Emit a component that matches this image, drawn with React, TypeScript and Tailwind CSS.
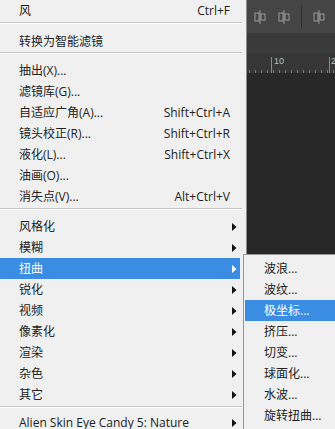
import React from 'react';

type Item =
  | { kind: 'item'; label: string; shortcut?: string; arrow?: boolean; active?: boolean }
  | { kind: 'sep'; h: string; pt: string };

const font = { fontFamily: '"Open Sans", "Noto Sans CJK SC", sans-serif' };

const items: Item[] = [
  { kind: 'item', label: '风', shortcut: 'Ctrl+F' },
  { kind: 'sep', h: 'h-[10px]', pt: 'pt-[1px]' },
  { kind: 'item', label: '转换为智能滤镜' },
  { kind: 'sep', h: 'h-[8px]', pt: 'pt-0' },
  { kind: 'item', label: '抽出(X)...' },
  { kind: 'item', label: '滤镜库(G)...' },
  { kind: 'item', label: '自适应广角(A)...', shortcut: 'Shift+Ctrl+A' },
  { kind: 'item', label: '镜头校正(R)...', shortcut: 'Shift+Ctrl+R' },
  { kind: 'item', label: '液化(L)...', shortcut: 'Shift+Ctrl+X' },
  { kind: 'item', label: '油画(O)...' },
  { kind: 'item', label: '消失点(V)...', shortcut: 'Alt+Ctrl+V' },
  { kind: 'sep', h: 'h-[9px]', pt: 'pt-[1px]' },
  { kind: 'item', label: '风格化', arrow: true },
  { kind: 'item', label: '模糊', arrow: true },
  { kind: 'item', label: '扭曲', arrow: true, active: true },
  { kind: 'item', label: '锐化', arrow: true },
  { kind: 'item', label: '视频', arrow: true },
  { kind: 'item', label: '像素化', arrow: true },
  { kind: 'item', label: '渲染', arrow: true },
  { kind: 'item', label: '杂色', arrow: true },
  { kind: 'item', label: '其它', arrow: true },
  { kind: 'sep', h: 'h-[7px]', pt: 'pt-[1px]' },
  { kind: 'item', label: 'Alien Skin Eye Candy 5: Nature', arrow: true },
];

const subItems = ['波浪...', '波纹...', '极坐标...', '挤压...', '切变...', '球面化...', '水波...', '旋转扭曲...'];

function Arrow({ white }: { white?: boolean }) {
  return (
    <svg width="5" height="8" viewBox="0 0 5 8" className="shrink-0">
      <polygon points="0,0 4.5,4 0,8" fill={white ? '#ffffff' : '#111111'} />
    </svg>
  );
}

function AlignIcon() {
  return (
    <svg width="14" height="14" viewBox="0 0 14 14">
      <rect x="6.5" y="0" width="1" height="14" fill="#9a9a9a" />
      <rect x="2" y="3" width="4" height="8" fill="none" stroke="#9a9a9a" strokeWidth="1" />
      <rect x="8" y="4" width="4" height="6" fill="none" stroke="#9a9a9a" strokeWidth="1" />
    </svg>
  );
}

export default function App() {
  return (
    <div className="relative w-[335px] h-[429px] overflow-hidden bg-[#282828] flex" style={font}>
      {/* main menu */}
      <div className="w-[247px] shrink-0 bg-[#f0f0f0] border-r border-[#8a8a8a] text-[12px] text-[#222222]">
        {items.map((it, i) =>
          it.kind === 'sep' ? (
            <div key={i} className={`${it.h} ${it.pt} pr-[4px]`}>
              <div className="h-[2px] border-t border-[#c4c4c4] border-b border-b-white" />
            </div>
          ) : (
            <div
              key={i}
              className={`h-[21px] flex items-center pl-[19px] mr-[6px] ${it.arrow ? 'pr-[3px]' : 'pr-[10px]'} ${
                it.active ? 'bg-[#3b8de4] text-white' : ''
              }`}
            >
              <span className="flex-1 whitespace-nowrap">{it.label}</span>
              {it.shortcut && <span className="whitespace-nowrap">{it.shortcut}</span>}
              {it.arrow && <Arrow white={it.active} />}
            </div>
          )
        )}
      </div>

      {/* dark workspace on the right */}
      <div className="flex-1 flex flex-col">
        <div className="h-[33px] bg-[#454545] flex items-center pl-[6px] gap-[10px]">
          <AlignIcon />
          <AlignIcon />
          <div className="w-px h-[22px] bg-[#2e2e2e]" />
          <AlignIcon />
        </div>
        <div className="h-[20px] bg-[#3a3a3a]" />
        <div className="h-[20px] bg-[#363636] relative flex items-end">
          <div className="absolute left-[24px] top-[4px] h-[16px] w-px bg-[#8a8a8a]" />
          <span className="absolute left-[27px] top-[2px] text-[9px] text-[#bdbdbd]" style={{ fontFamily: '"Liberation Sans", sans-serif' }}>
            10
          </span>
          <div className="absolute left-[82px] top-[4px] h-[16px] w-px bg-[#8a8a8a]" />
          <span className="absolute left-[84px] top-[2px] text-[9px] text-[#bdbdbd]" style={{ fontFamily: '"Liberation Sans", sans-serif' }}>
            2
          </span>
          <div className="flex items-end gap-[5px] pl-[2px] h-[4px] w-full">
            {Array.from({ length: 18 }).map((_, i) => (
              <div key={i} className="w-px h-[3px] bg-[#7a7a7a]" />
            ))}
          </div>
        </div>
        <div className="flex-1 bg-[#282828]" />
      </div>

      {/* submenu overlay */}
      <div className="absolute left-[243px] top-[254px] w-[120px] h-[200px] bg-[#f0f0f0] border-l border-t border-[#979797] pt-[3px] text-[12px] text-[#222222]">
        {subItems.map((s) => (
          <div
            key={s}
            className={`h-[21px] flex items-center pl-[19px] ml-[1px] ${s === '极坐标...' ? 'bg-[#3b8de4] text-white' : ''}`}
          >
            {s}
          </div>
        ))}
      </div>
    </div>
  );
}
